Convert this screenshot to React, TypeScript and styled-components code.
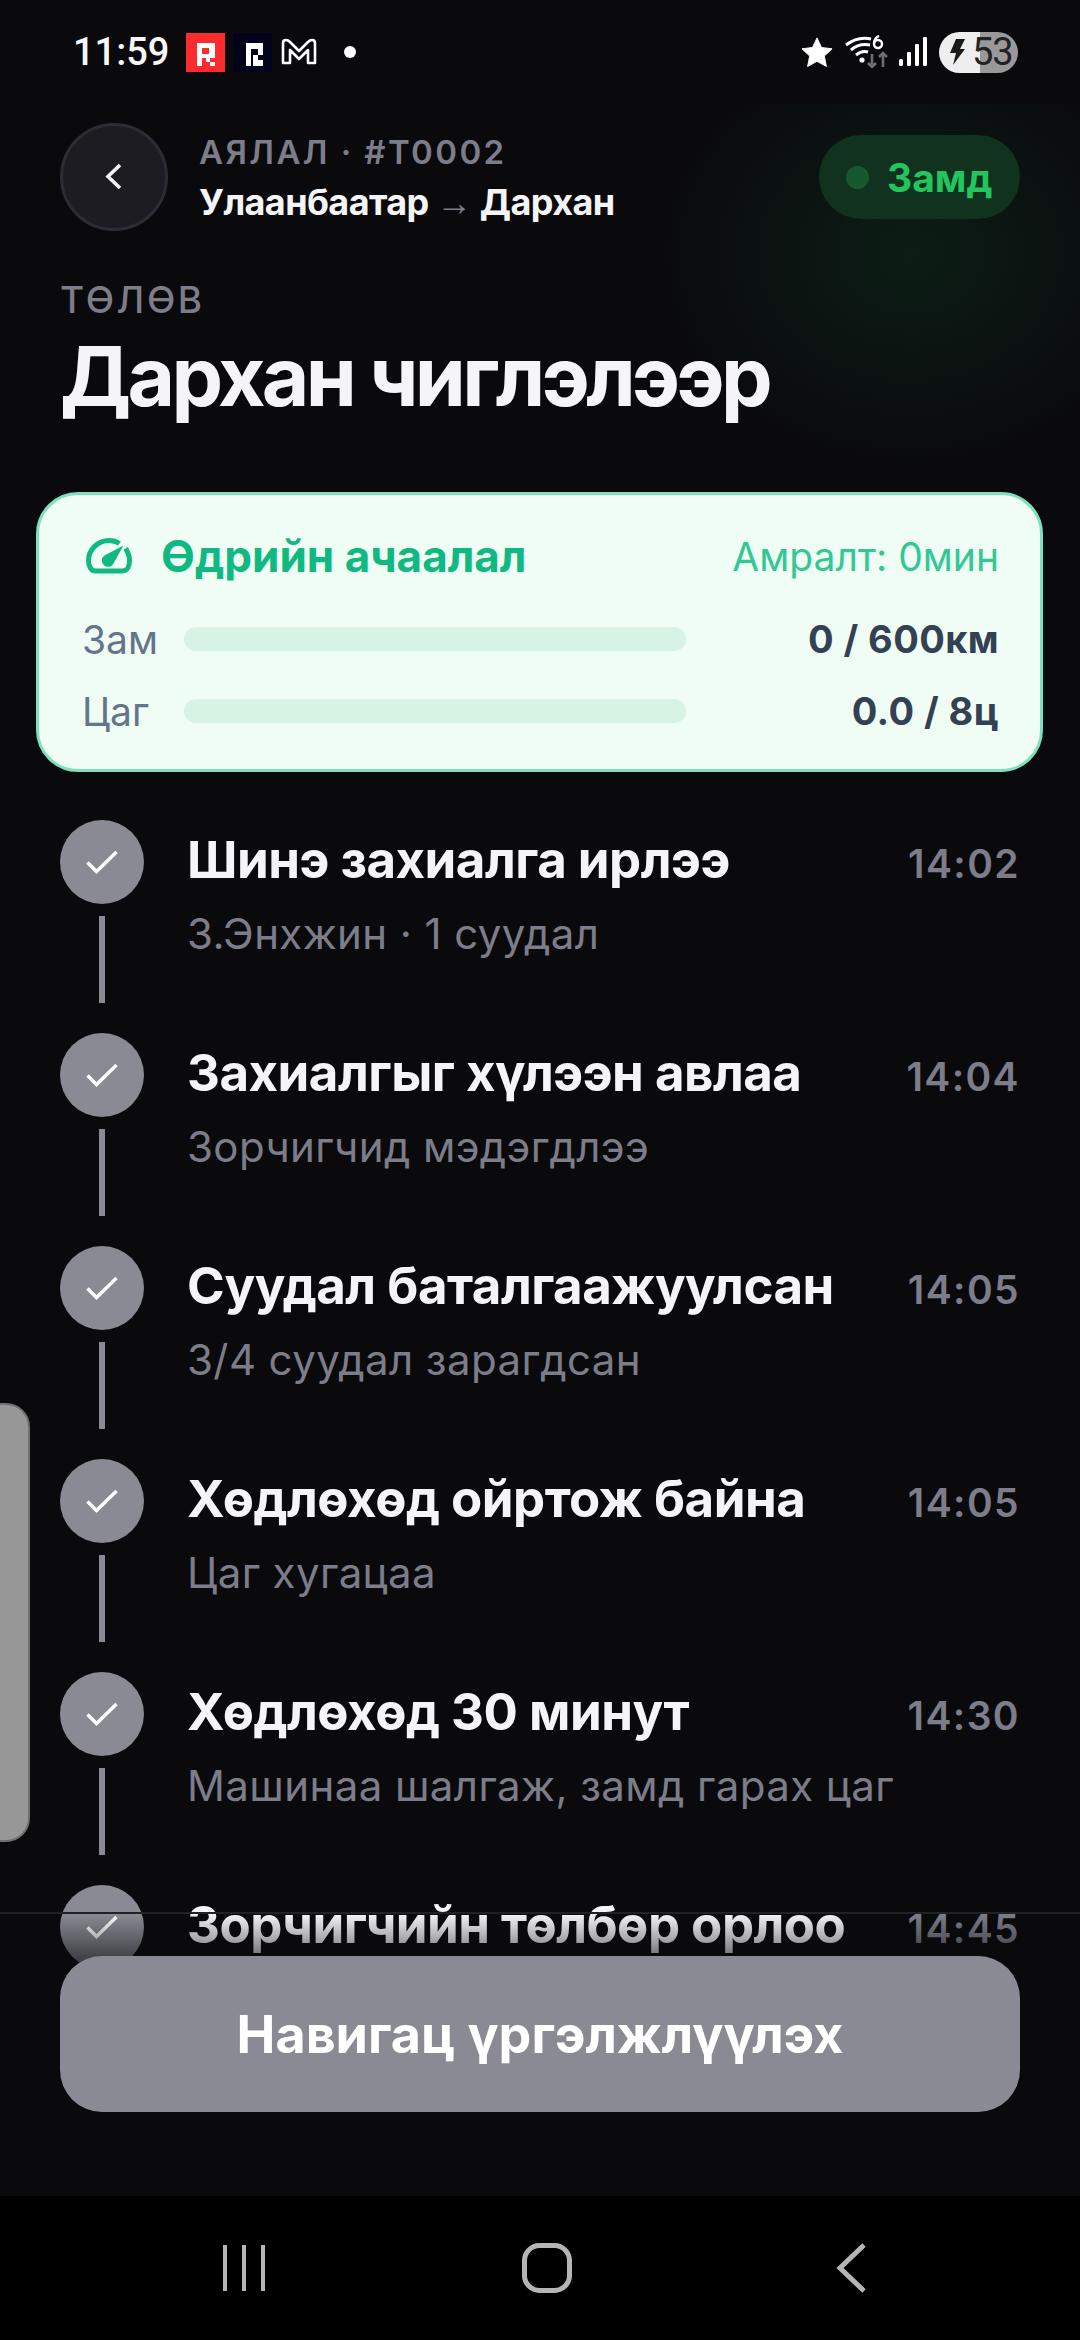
import React from 'react'
import styled, { createGlobalStyle } from 'styled-components'

const GlobalStyle = createGlobalStyle`
  html, body {
    margin: 0;
    padding: 0;
    background: #000;
  }
  * {
    box-sizing: border-box;
  }
`

interface IStep {
  title: string
  sub?: string
  time: string
}

const steps: IStep[] = [
  { title: 'Шинэ захиалга ирлээ', sub: 'З.Энхжин · 1 суудал', time: '14:02' },
  { title: 'Захиалгыг хүлээн авлаа', sub: 'Зорчигчид мэдэгдлээ', time: '14:04' },
  { title: 'Суудал баталгаажуулсан', sub: '3/4 суудал зарагдсан', time: '14:05' },
  { title: 'Хөдлөхөд ойртож байна', sub: 'Цаг хугацаа', time: '14:05' },
  { title: 'Хөдлөхөд 30 минут', sub: 'Машинаа шалгаж, замд гарах цаг', time: '14:30' },
  { title: 'Зорчигчийн төлбөр орлоо', time: '14:45' },
]

const QLogo: React.FC<{ bg: string; d: string }> = ({ bg, d }) => (
  <LogoBox bg={bg}>
    <svg width="39" height="39" viewBox="0 0 39 39">
      <path d={d} fill="#fff" fillRule="evenodd" />
    </svg>
  </LogoBox>
)

const App: React.FC = () => {
  return (
    <Screen>
      <GlobalStyle />
      <StatusBar>
        <StatusLeft>
          <Clock>11:59</Clock>
          <QLogo bg="#fc2b2e" d="M11 10H29V25H16V33H11ZM16 15V21H23V15ZM20 25H24V29H20ZM24 29H29V33H24Z" />
          <QLogo bg="#02021a" d="M13 10H30V22H18V33H13ZM18 16V22H25V16ZM20 22H25V27H20ZM25 27H30V33H25ZM20 27H25V33H20Z" />
          <svg width="38" height="30" viewBox="0 0 38 30" fill="none">
            <path d="M3 26V6Q3 3 6 3Q8 3 10 5L19 14L28 5Q30 3 32 3Q35 3 35 6V26H28V13L19 22L10 13V26Z" stroke="#fff" strokeWidth="2.6" strokeLinejoin="round" />
          </svg>
          <NotifDot />
        </StatusLeft>
        <StatusRight>
          <StarIcon width="32" height="32" viewBox="0 0 34 32">
            <path d="M17 1L21.8 11.2L33 12.6L24.8 20.3L27 31.4L17 25.9L7 31.4L9.2 20.3L1 12.6L12.2 11.2Z" fill="#fff" stroke="#fff" strokeLinejoin="round" />
          </StarIcon>
          <svg width="46" height="34" viewBox="0 0 46 34" fill="none">
            <path d="M1 10Q13 1 26 4" stroke="#fff" strokeWidth="3" />
            <path d="M6 15Q14 8 25 10" stroke="#fff" strokeWidth="3" />
            <path d="M11 20Q17 15 23 17" stroke="#fff" strokeWidth="3" />
            <circle cx="17" cy="25" r="2.6" fill="#fff" />
            <circle cx="33" cy="9" r="4" stroke="#fff" strokeWidth="2.4" />
            <path d="M29 9Q29 3 34 1" stroke="#fff" strokeWidth="2.4" />
            <path d="M27 19V32M23 28L27 32L31 28" stroke="#6e6e6e" strokeWidth="2.6" />
            <path d="M38 32V18M34 22L38 18L42 22" stroke="#6e6e6e" strokeWidth="2.6" />
          </svg>
          <svg width="28" height="30" viewBox="0 0 28 30" fill="#fff">
            <rect x="0" y="22" width="4" height="7" rx="1.5" />
            <rect x="8" y="15" width="4" height="14" rx="1" />
            <rect x="16" y="7" width="4" height="22" rx="1" />
            <rect x="24" y="0" width="4" height="29" rx="1" />
          </svg>
          <Battery>
            <svg width="15" height="26" viewBox="0 0 15 26">
              <path d="M6 0H15L10 10H15L3 26L6 14H0Z" fill="#1a1a1a" />
            </svg>
            <BatteryText>53</BatteryText>
          </Battery>
        </StatusRight>
      </StatusBar>

      <Main>
        <Glow />
        <EdgeHandle />
        <Header>
          <BackButton>
            <svg width="20" height="30" viewBox="0 0 20 30" fill="none">
              <path d="M16 3L4 14.5L16 26" stroke="#f5f5f7" strokeWidth="3.6" />
            </svg>
          </BackButton>
          <HeaderText>
            <TripCode>АЯЛАЛ · #T0002</TripCode>
            <TripRoute>
              Улаанбаатар <span>→</span> Дархан
            </TripRoute>
          </HeaderText>
          <Badge>
            <BadgeDot />
            Замд
          </Badge>
        </Header>

        <TitleBlock>
          <Overline>ТӨЛӨВ</Overline>
          <Heading>Дархан чиглэлээр</Heading>
        </TitleBlock>

        <LoadCard>
          <CardTop>
            <CardTitle>
              <svg width="46" height="36" viewBox="0 0 46 36" fill="none">
                <path d="M33.5 5.5C30.5 3.5 27 2.5 23 2.5C12 2.5 2.5 11.5 2.5 22.5C2.5 27 4.5 33 9.5 33H36.5C41.5 33 43.5 27.5 43.5 22.5C43.5 18 42 14 39.5 10.5" stroke="#10b981" strokeWidth="5" />
                <path d="M37.5 7.5L27.5 25.5A6.2 6.2 0 1 1 18.5 17.5Z" fill="#10b981" />
              </svg>
              Өдрийн ачаалал
            </CardTitle>
            <RestText>Амралт: 0мин</RestText>
          </CardTop>
          <Meter>
            <MeterLabel>Зам</MeterLabel>
            <MeterTrack />
            <MeterValue>0 / 600км</MeterValue>
          </Meter>
          <Meter>
            <MeterLabel>Цаг</MeterLabel>
            <MeterTrack />
            <MeterValue>0.0 / 8ц</MeterValue>
          </Meter>
        </LoadCard>

        <Timeline>
          {steps.map((s) => (
            <Step key={s.title + s.time}>
              <Rail>
                <StepDot>
                  <svg width="32" height="24" viewBox="0 0 32 24" fill="none">
                    <path d="M1.5 12.5L10.5 21.5L30.5 2" stroke="#fff" strokeWidth="3.4" />
                  </svg>
                </StepDot>
                <RailLine />
              </Rail>
              <StepBody>
                <StepHead>
                  <StepTitle>{s.title}</StepTitle>
                  <StepTime>{s.time}</StepTime>
                </StepHead>
                {s.sub && <StepSub>{s.sub}</StepSub>}
              </StepBody>
            </Step>
          ))}
        </Timeline>

        <Footer>
          <PrimaryButton>Навигац үргэлжлүүлэх</PrimaryButton>
        </Footer>
      </Main>

      <NavBar>
        <NavSlot>
          <svg width="44" height="48" viewBox="0 0 44 48" stroke="#b5b5b5" strokeWidth="4">
            <path d="M3 1V47M22 1V47M41 1V47" />
          </svg>
        </NavSlot>
        <NavSlot>
          <svg width="50" height="50" viewBox="0 0 50 50" fill="none" stroke="#b5b5b5" strokeWidth="5">
            <rect x="2.5" y="2.5" width="45" height="45" rx="15" />
          </svg>
        </NavSlot>
        <NavSlot>
          <svg width="30" height="50" viewBox="0 0 30 50" fill="none" stroke="#b5b5b5" strokeWidth="5">
            <path d="M28 2L4 25L28 48" />
          </svg>
        </NavSlot>
      </NavBar>
    </Screen>
  )
}

export default App

const Screen = styled.div`
  width: 1080px;
  height: 2340px;
  overflow: hidden;
  display: flex;
  flex-direction: column;
  background: #0a0a0d;
  font-family: Inter, "Noto Sans", sans-serif;
  color: #f5f5f7;
`

const StatusBar = styled.div`
  height: 104px;
  flex: none;
  display: flex;
  justify-content: space-between;
  align-items: center;
  padding: 0 62px 0 73px;
  position: relative;
  z-index: 2;
`
const StatusLeft = styled.div`
  display: flex;
  align-items: center;
  gap: 8px;
`
const Clock = styled.div`
  font-family: Roboto, sans-serif;
  font-size: 38px;
  font-weight: 500;
  color: #f7f7f7;
  width: 105px;
`
const LogoBox = styled.div<{ bg: string }>`
  width: 39px;
  height: 39px;
  display: flex;
  background: ${({ bg }) => bg};
`
const NotifDot = styled.div`
  width: 12px;
  height: 12px;
  border-radius: 50%;
  background: #fff;
  margin-left: 18px;
`
const StatusRight = styled.div`
  display: flex;
  align-items: center;
  gap: 8px;
`
const StarIcon = styled.svg`
  margin-right: 4px;
`
const Battery = styled.div`
  width: 79px;
  height: 41px;
  border-radius: 21px;
  display: flex;
  align-items: center;
  gap: 7px;
  padding-left: 11px;
  background: linear-gradient(90deg, #eeeeee 0 41px, #999999 41px);
  margin-left: 4px;
`
const BatteryText = styled.span`
  font-family: Roboto, sans-serif;
  font-size: 38px;
  letter-spacing: -1px;
  color: #222;
`

const Main = styled.div`
  flex: 1;
  position: relative;
  overflow: hidden;
`
const Glow = styled.div`
  position: absolute;
  left: 660px;
  top: -60px;
  width: 500px;
  height: 420px;
  background: radial-gradient(closest-side, rgba(34, 197, 94, 0.1), rgba(34, 197, 94, 0));
`
const EdgeHandle = styled.div`
  position: absolute;
  left: -4px;
  top: 1299px;
  width: 34px;
  height: 439px;
  background: #979797;
  border: 2px solid #707070;
  border-radius: 0 24px 24px 0;
  z-index: 3;
`

const Header = styled.div`
  position: relative;
  display: flex;
  align-items: center;
  padding: 19px 60px 0;
`
const BackButton = styled.div`
  width: 108px;
  height: 108px;
  flex: none;
  border-radius: 50%;
  background: #1c1c22;
  border: 3px solid #2c2c33;
  display: flex;
  align-items: center;
  justify-content: center;
`
const HeaderText = styled.div`
  flex: 1;
  margin-left: 31px;
`
const TripCode = styled.div`
  font-size: 33px;
  font-weight: 600;
  letter-spacing: 2.4px;
  line-height: 46px;
  color: #7d7d8a;
`
const TripRoute = styled.div`
  margin-top: 4px;
  font-size: 36px;
  font-weight: 700;
  letter-spacing: -0.6px;
  line-height: 46px;
  color: #f5f5f7;
  span {
    font-family: "Liberation Sans", sans-serif;
    font-weight: 400;
    color: #7d7d8a;
  }
`
const Badge = styled.div`
  width: 201px;
  height: 84px;
  flex: none;
  border-radius: 42px;
  background: #10321f;
  display: flex;
  align-items: center;
  gap: 18px;
  padding-left: 27px;
  font-size: 39px;
  font-weight: 700;
  color: #22c55e;
`
const BadgeDot = styled.div`
  width: 23px;
  height: 23px;
  border-radius: 50%;
  background: #17592f;
`

const TitleBlock = styled.div`
  position: relative;
  padding: 46px 60px 0;
`
const Overline = styled.div`
  font-size: 37px;
  font-weight: 500;
  letter-spacing: 2.6px;
  line-height: 46px;
  color: #7d7d8a;
`
const Heading = styled.h1`
  margin: 8px 0 0;
  font-size: 82px;
  font-weight: 700;
  letter-spacing: -3.6px;
  line-height: 92px;
  color: #f5f5f7;
`

const LoadCard = styled.div`
  position: relative;
  margin: 69px 37px 0 36px;
  height: 280px;
  padding: 36px 41px 0 43px;
  background: #f0fdf4;
  border: 3px solid #7fe0bd;
  border-radius: 42px;
`
const CardTop = styled.div`
  display: flex;
  justify-content: space-between;
  align-items: center;
  height: 50px;
  margin-bottom: 22px;
`
const CardTitle = styled.div`
  display: flex;
  align-items: center;
  gap: 29px;
  margin-left: 4px;
  font-size: 44px;
  font-weight: 700;
  color: #10b981;
`
const RestText = styled.div`
  font-size: 39px;
  color: #34c796;
`
const Meter = styled.div`
  display: flex;
  align-items: center;
  height: 72px;
`
const MeterLabel = styled.div`
  width: 102px;
  font-size: 39px;
  color: #64748b;
`
const MeterTrack = styled.div`
  width: 502px;
  height: 24px;
  border-radius: 12px;
  background: #d6f3e4;
`
const MeterValue = styled.div`
  flex: 1;
  text-align: right;
  font-size: 38px;
  font-weight: 700;
  letter-spacing: 0.4px;
  color: #334155;
`

const Timeline = styled.div`
  position: relative;
  padding: 48px 60px 0;
`
const Step = styled.div`
  display: flex;
  height: 213px;
  gap: 43px;
`
const Rail = styled.div`
  width: 84px;
  flex: none;
  display: flex;
  flex-direction: column;
  align-items: center;
  gap: 12px;
`
const StepDot = styled.div`
  width: 84px;
  height: 84px;
  border-radius: 50%;
  background: #8a8a94;
  display: flex;
  align-items: center;
  justify-content: center;
`
const RailLine = styled.div`
  width: 6px;
  height: 87px;
  background: #8a8a94;
`
const StepBody = styled.div`
  flex: 1;
  padding-top: 10px;
`
const StepHead = styled.div`
  display: flex;
  justify-content: space-between;
  align-items: center;
  height: 58px;
`
const StepTitle = styled.div`
  font-size: 51px;
  font-weight: 700;
  letter-spacing: -0.5px;
  color: #f5f5f7;
`
const StepTime = styled.div`
  font-size: 39px;
  font-weight: 600;
  letter-spacing: 1.4px;
  color: #7d7d8a;
  margin-top: 8px;
`
const StepSub = styled.div`
  margin-top: 23px;
  font-size: 42px;
  line-height: 46px;
  letter-spacing: 0.4px;
  color: #7d7d8a;
`

const Footer = styled.div`
  position: absolute;
  left: 0;
  right: 0;
  bottom: 0;
  height: 284px;
  padding: 42px 60px 0;
  border-top: 2px solid rgba(255, 255, 255, 0.1);
  background: linear-gradient(180deg, rgba(10, 10, 13, 0) 0, rgba(10, 10, 13, 0.55) 42px, #0a0a0d 90px);
  z-index: 2;
`
const PrimaryButton = styled.div`
  height: 156px;
  border-radius: 42px;
  background: #8a8a94;
  display: flex;
  align-items: center;
  justify-content: center;
  font-size: 52px;
  font-weight: 700;
  color: #fff;
`

const NavBar = styled.div`
  height: 144px;
  flex: none;
  background: #000;
  display: grid;
  grid-template-columns: 222px 44px 256px 50px 264px 30px 214px;
`
const NavSlot = styled.div`
  display: flex;
  align-items: center;
  justify-content: center;
  height: 50px;
  margin-top: 47px;
  &:nth-child(1) { grid-column: 2; }
  &:nth-child(2) { grid-column: 4; }
  &:nth-child(3) { grid-column: 6; }
`
